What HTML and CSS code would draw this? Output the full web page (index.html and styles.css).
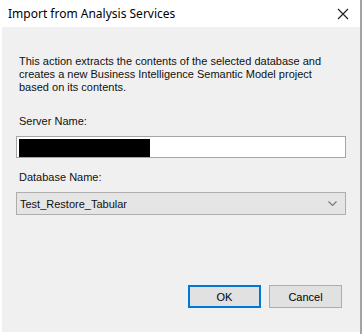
FILE: index.html
```html
<!doctype html>
<html>
<head>
<meta charset="utf-8" />
<title>Import from Analysis Services</title>
<link rel="stylesheet" href="styles.css">
</head>
<body>
	<div class="window">
		<div class="titlebar">
			<span class="title">Import from Analysis Services</span>
			<svg class="close" width="12" height="12" viewBox="0 0 12 12"><path d="M1 1L11 11M11 1L1 11" stroke="#222" stroke-width="1.2" fill="none"/></svg>
		</div>
		<div class="content">
			<p class="intro">This action extracts the contents of the selected database and creates a new Business Intelligence Semantic Model project based on its contents.</p>
			<label class="label">Server Name:</label>
			<div class="textbox"><span class="redact"></span></div>
			<label class="label label-db">Database Name:</label>
			<div class="combo">
				<span>Test_Restore_Tabular</span>
				<svg width="9" height="5" viewBox="0 0 9 5"><path d="M0.5 0.5L4.5 4.5L8.5 0.5" stroke="#777" stroke-width="1.1" fill="none"/></svg>
			</div>
			<div class="buttons">
				<a class="btn btn-ok" href="javascript:;">OK</a>
				<a class="btn" href="javascript:;">Cancel</a>
			</div>
		</div>
	</div>
</body>
</html>
```
FILE: styles.css
```css
html,body{margin:0; padding:0; background:#fff;}
.window{width:362px; height:334px; box-sizing:border-box; border-right:2px solid #a3a3a3; display:flex; flex-direction:column; font-family:"Liberation Sans", Arial, sans-serif; font-size:11px; color:#111;}
.titlebar{height:27px; display:flex; align-items:center; justify-content:space-between; padding:0 11px 0 8px; background:#fff;}
.title{font-family:"Noto Sans", "Open Sans", sans-serif; font-size:12px; color:#000;}
.content{flex:1; margin:0 0 2px 2px; background:#f0f0f0; padding:28px 14px 0 14px; display:flex; flex-direction:column;}
.intro{margin:0 0 0 3px; line-height:13px; width:322px;}
.label{display:block; margin:21px 0 0 3px; line-height:13px;}
.label-db{margin-top:13px;}
.textbox{height:22px; box-sizing:border-box; margin-top:8px; border:1px solid #a5a5a5; background:#fff; padding:2px 0 0 2px;}
.redact{display:block; width:131px; height:18px; background:#000;}
.combo{height:23px; box-sizing:border-box; margin-top:8px; border:1px solid #adadad; background:#e5e5e5; display:flex; align-items:center; justify-content:space-between; padding:0 8px 0 3px;}
.buttons{display:flex; justify-content:flex-end; gap:8px; margin-top:70px; padding-right:4px;}
.btn{width:73px; height:23px; box-sizing:border-box; border:1px solid #adadad; background:#e1e1e1; color:#000; text-decoration:none; display:flex; align-items:center; justify-content:center;}
.btn-ok{border:2px solid #0078d7;}
```
